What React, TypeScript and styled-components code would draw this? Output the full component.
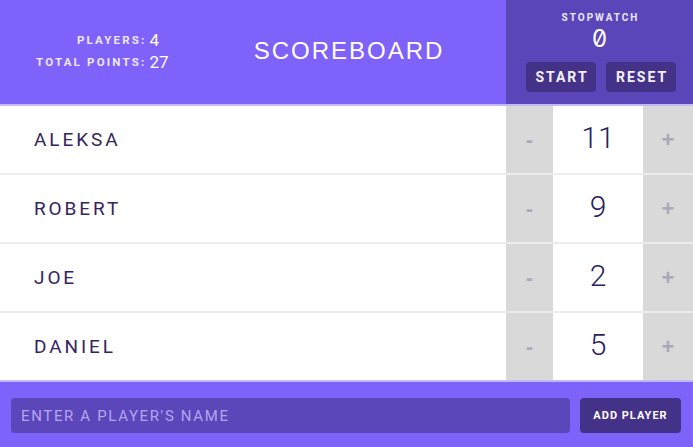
import React from "react";
import styled, { createGlobalStyle } from "styled-components";

const GlobalStyle = createGlobalStyle`
  html, body { margin: 0; padding: 0; background: #ffffff; }
  body { font-family: Roboto, "Liberation Sans", sans-serif; }
  * { box-sizing: border-box; }
`;

const Board = styled.div`
  width: 693px;
  height: 447px;
  overflow: hidden;
  display: flex;
  flex-direction: column;
`;

const Header = styled.header`
  display: flex;
  height: 106px;
  background: #7f62fa;
  border-bottom: 2px solid #c4b8fc;
  color: #ffffff;
`;

const Stats = styled.div`
  width: 192px;
  padding-left: 36px;
  display: grid;
  grid-template-columns: auto auto;
  align-content: center;
  justify-content: start;
  row-gap: 3px;
  padding-bottom: 2px;
`;

const StatLabel = styled.span`
  text-align: right;
  font-size: 11.5px;
  font-weight: 700;
  letter-spacing: 2.2px;
  color: #ece8ff;
  align-self: end;
  line-height: 19px;
  padding-right: 3px;
`;

const StatValue = styled.span`
  font-size: 17px;
  line-height: 19px;
  color: #ffffff;
  align-self: end;
`;

const Title = styled.h1`
  flex: 1;
  margin: 0;
  align-self: center;
  text-align: center;
  font-family: "Liberation Sans", Arial, sans-serif;
  font-weight: 400;
  font-size: 24px;
  letter-spacing: 2px;
  padding-bottom: 3px;
`;

const Stopwatch = styled.div`
  width: 187px;
  background: #5b46b9;
  display: flex;
  flex-direction: column;
  align-items: center;
  padding-top: 11px;
`;

const WatchLabel = styled.div`
  font-size: 10px;
  font-weight: 700;
  letter-spacing: 2px;
  color: #ece8ff;
  line-height: 13px;
  padding-left: 2px;
`;

const WatchTime = styled.div`
  font-family: Inter, "DejaVu Sans Mono", monospace;
  font-feature-settings: "zero" 1, "tnum" 1;
  font-variant-numeric: slashed-zero tabular-nums;
  font-size: 24px;
  line-height: 30px;
  color: #ffffff;
`;

const WatchButtons = styled.div`
  display: flex;
  gap: 10px;
  margin-top: 8px;
  padding-left: 3px;
`;

const WatchButton = styled.button`
  width: 70px;
  height: 30px;
  border: none;
  border-radius: 4px;
  background: #443288;
  color: #f4f2ff;
  font-family: Roboto, "Liberation Sans", sans-serif;
  font-weight: 700;
  font-size: 14px;
  letter-spacing: 2px;
  padding: 0 0 0 2px;
  cursor: pointer;
`;

const Row = styled.div<{ $last?: boolean }>`
  display: flex;
  height: ${(p) => (p.$last ? "67px" : "69px")};
  border-bottom: ${(p) => (p.$last ? "none" : "2px solid #ececec")};
  background: #ffffff;
`;

const Name = styled.div`
  flex: 1;
  display: flex;
  align-items: center;
  padding-left: 34px;
  font-size: 19px;
  letter-spacing: 2.9px;
  color: #35245f;
`;

const Counter = styled.div`
  width: 187px;
  display: flex;
`;

const CountButton = styled.button<{ $w: number }>`
  width: ${(p) => p.$w}px;
  border: none;
  background: #d9d9d9;
  color: #aba8ba;
  font-family: "Liberation Sans", Arial, sans-serif;
  font-weight: 700;
  font-size: 22px;
  padding: 0;
  cursor: pointer;
`;

const Score = styled.div`
  width: 90px;
  display: flex;
  align-items: center;
  justify-content: center;
  font-size: 30px;
  font-weight: 300;
  color: #2a1f63;
  padding-bottom: 4px;
`;

const Footer = styled.form`
  flex: 1;
  display: flex;
  gap: 10px;
  background: #7f62fa;
  border-top: 2px solid #c4b8fc;
  padding: 16px 12px 14px 11px;
  margin: 0;
`;

const NameInput = styled.input`
  flex: 1;
  height: 35px;
  border: none;
  border-radius: 4px;
  background: #5c47ba;
  padding: 0 10px;
  font-family: Roboto, "Liberation Sans", sans-serif;
  font-size: 15px;
  letter-spacing: 1.65px;
  color: #ffffff;
  outline: none;
  &::placeholder {
    color: #b4a5f2;
  }
`;

const AddButton = styled.button`
  width: 101px;
  height: 35px;
  border: none;
  border-radius: 4px;
  background: #443288;
  color: #ffffff;
  font-family: Roboto, "Liberation Sans", sans-serif;
  font-weight: 700;
  font-size: 11px;
  letter-spacing: 1px;
  padding: 0;
  cursor: pointer;
`;

const players = [
  { name: "ALEKSA", score: 11 },
  { name: "ROBERT", score: 9 },
  { name: "JOE", score: 2 },
  { name: "DANIEL", score: 5 },
];

export default function App() {
  const total = players.reduce((s, p) => s + p.score, 0);
  return (
    <Board>
      <GlobalStyle />
      <Header>
        <Stats>
          <StatLabel>PLAYERS:</StatLabel>
          <StatValue>{players.length}</StatValue>
          <StatLabel>TOTAL POINTS:</StatLabel>
          <StatValue>{total}</StatValue>
        </Stats>
        <Title>SCOREBOARD</Title>
        <Stopwatch>
          <WatchLabel>STOPWATCH</WatchLabel>
          <WatchTime>0</WatchTime>
          <WatchButtons>
            <WatchButton type="button">START</WatchButton>
            <WatchButton type="button">RESET</WatchButton>
          </WatchButtons>
        </Stopwatch>
      </Header>
      {players.map((p, i) => (
        <Row key={p.name} $last={i === players.length - 1}>
          <Name>{p.name}</Name>
          <Counter>
            <CountButton type="button" $w={47}>-</CountButton>
            <Score>{p.score}</Score>
            <CountButton type="button" $w={50}>+</CountButton>
          </Counter>
        </Row>
      ))}
      <Footer onSubmit={(e) => e.preventDefault()}>
        <NameInput type="text" placeholder="ENTER A PLAYER'S NAME" />
        <AddButton type="submit">ADD PLAYER</AddButton>
      </Footer>
    </Board>
  );
}
